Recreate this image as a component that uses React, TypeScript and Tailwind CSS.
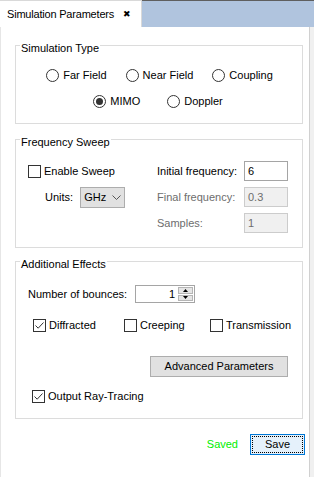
import React from "react";

function Radio({ label, checked }: { label: string; checked?: boolean }) {
  return (
    <label className="flex items-center gap-[4px] h-4">
      <span className="w-[13px] h-[13px] rounded-full border border-[#333333] bg-white flex items-center justify-center">
        {checked && <span className="w-[7px] h-[7px] rounded-full bg-[#333333]" />}
      </span>
      <span>{label}</span>
    </label>
  );
}

function Check({ label, checked }: { label: string; checked?: boolean }) {
  return (
    <label className="flex items-center gap-[3px] h-4">
      <span className="w-[13px] h-[13px] border border-[#333333] bg-white flex items-center justify-center">
        {checked && (
          <svg width="11" height="11" viewBox="0 0 11 11">
            <path d="M1.5 5.5 L4.2 8.2 L9.5 2.5" fill="none" stroke="#333333" strokeWidth="1" />
          </svg>
        )}
      </span>
      <span className="whitespace-nowrap">{label}</span>
    </label>
  );
}

function Group({ title, className, children }: { title: string; className?: string; children: React.ReactNode }) {
  return (
    <fieldset className={`w-[288px] border border-[#dcdcdc] ${className ?? ""}`}>
      <legend className="ml-[4px] px-[1px] pt-[6px] leading-[15px]">{title}</legend>
      {children}
    </fieldset>
  );
}

export default function App() {
  return (
    <div className="w-[314px] h-[477px] flex flex-col bg-white text-[11px] text-black font-['Liberation_Sans',Arial,sans-serif] overflow-hidden">
      {/* Tab strip */}
      <div className="h-[27px] flex shrink-0">
        <div className="w-[142px] flex items-center pl-[7px] bg-white border-t border-r border-[#d9d9d9] whitespace-nowrap">
          <span className="tracking-[-0.2px]">Simulation Parameters</span>
          <span className="ml-[9px] text-[9px] font-['DejaVu_Sans',sans-serif] leading-none">✖</span>
        </div>
        <div className="flex-1 bg-[#b0c4de] border-t border-[#5f5f5f]" />
      </div>

      {/* Panel */}
      <div className="flex-1 flex">
        <div className="w-[310px] border-l border-r border-l-[#e6e6e6] border-r-[#d0d0d0] pl-[14px] pt-[8px] flex flex-col">
          <Group title="Simulation Type" className="pt-[11px] pb-[14px]">
            <div className="flex flex-col gap-[10px]">
              <div className="flex justify-center gap-[19px] pl-[1px]">
                <Radio label="Far Field" />
                <Radio label="Near Field" />
                <Radio label="Coupling" />
              </div>
              <div className="flex justify-center gap-[27px] pr-[2px]">
                <Radio label="MIMO" checked />
                <Radio label="Doppler" />
              </div>
            </div>
          </Group>

          <Group title="Frequency Sweep" className="mt-[5px] pt-[11px] pb-[14px]">
            <div className="flex">
              <div className="w-[141px] pl-[12px] flex flex-col gap-[6px]">
                <div className="h-[20px] flex items-center">
                  <Check label="Enable Sweep" />
                </div>
                <div className="h-[21px] flex items-center pl-[17px] gap-[7px]">
                  <span>Units:</span>
                  <div className="w-[45px] h-[21px] bg-[#e1e1e1] border border-[#adadad] flex items-center pl-[3px] gap-[6px]">
                    <span>GHz</span>
                    <svg width="9" height="5" viewBox="0 0 9 5">
                      <path d="M0.5 0.5 L4.5 4.5 L8.5 0.5" fill="none" stroke="#555555" strokeWidth="1" />
                    </svg>
                  </div>
                </div>
              </div>
              <div className="grid grid-cols-[87px_44px] gap-y-[6px] items-center">
                <span className="whitespace-nowrap">Initial frequency:</span>
                <div className="h-[20px] border border-[#a5a5a5] bg-white flex items-center px-[3px]">6</div>
                <span className="text-[#6d6d6d] whitespace-nowrap">Final frequency:</span>
                <div className="h-[20px] border border-[#cccccc] bg-[#f0f0f0] flex items-center px-[3px] text-[#6d6d6d]">0.3</div>
                <span className="text-[#6d6d6d]">Samples:</span>
                <div className="h-[20px] border border-[#cccccc] bg-[#f0f0f0] flex items-center px-[3px] text-[#6d6d6d]">1</div>
              </div>
            </div>
          </Group>

          <Group title="Additional Effects" className="mt-[3px] pt-[13px] pb-[14px]">
            <div className="flex flex-col">
              <div className="h-[18px] flex items-center pl-[12px]">
                <span className="w-[107px]">Number of bounces:</span>
                <div className="w-[60px] h-[18px] border border-[#a5a5a5] bg-white flex items-stretch">
                  <span className="flex-1 flex items-center justify-end pr-[3px]">1</span>
                  <div className="w-[15px] my-[1px] mr-[1px] flex flex-col gap-[1px]">
                    <div className="flex-1 bg-[#e5e5e5] border border-[#b5b5b5] flex items-center justify-center">
                      <svg width="5" height="3" viewBox="0 0 5 3"><path d="M0 3 L2.5 0 L5 3 Z" fill="#000000" /></svg>
                    </div>
                    <div className="flex-1 bg-[#e5e5e5] border border-[#b5b5b5] flex items-center justify-center">
                      <svg width="5" height="3" viewBox="0 0 5 3"><path d="M0 0 L2.5 3 L5 0 Z" fill="#000000" /></svg>
                    </div>
                  </div>
                </div>
              </div>
              <div className="mt-[14px] flex pl-[17px]">
                <div className="w-[91px]"><Check label="Diffracted" checked /></div>
                <div className="w-[86px]"><Check label="Creeping" /></div>
                <Check label="Transmission" />
              </div>
              <div className="mt-[23px] flex justify-end pr-[14px]">
                <button className="w-[138px] h-[21px] bg-[#e1e1e1] border border-[#adadad] flex items-center justify-center">
                  Advanced Parameters
                </button>
              </div>
              <div className="mt-[11px] pl-[16px]">
                <Check label="Output Ray-Tracing" checked />
              </div>
            </div>
          </Group>

          <div className="mt-[15px] flex items-center justify-end pr-[4px] gap-[12px]">
            <span className="text-[#00ee00]">Saved</span>
            <button className="w-[55px] h-[21px] bg-[#e5f1fb] border border-[#0078d7] p-[1px] flex">
              <span className="flex-1 border border-dotted border-black flex items-center justify-center">Save</span>
            </button>
          </div>
        </div>
        <div className="flex-1 bg-[#f0f0f0]" />
      </div>
    </div>
  );
}
